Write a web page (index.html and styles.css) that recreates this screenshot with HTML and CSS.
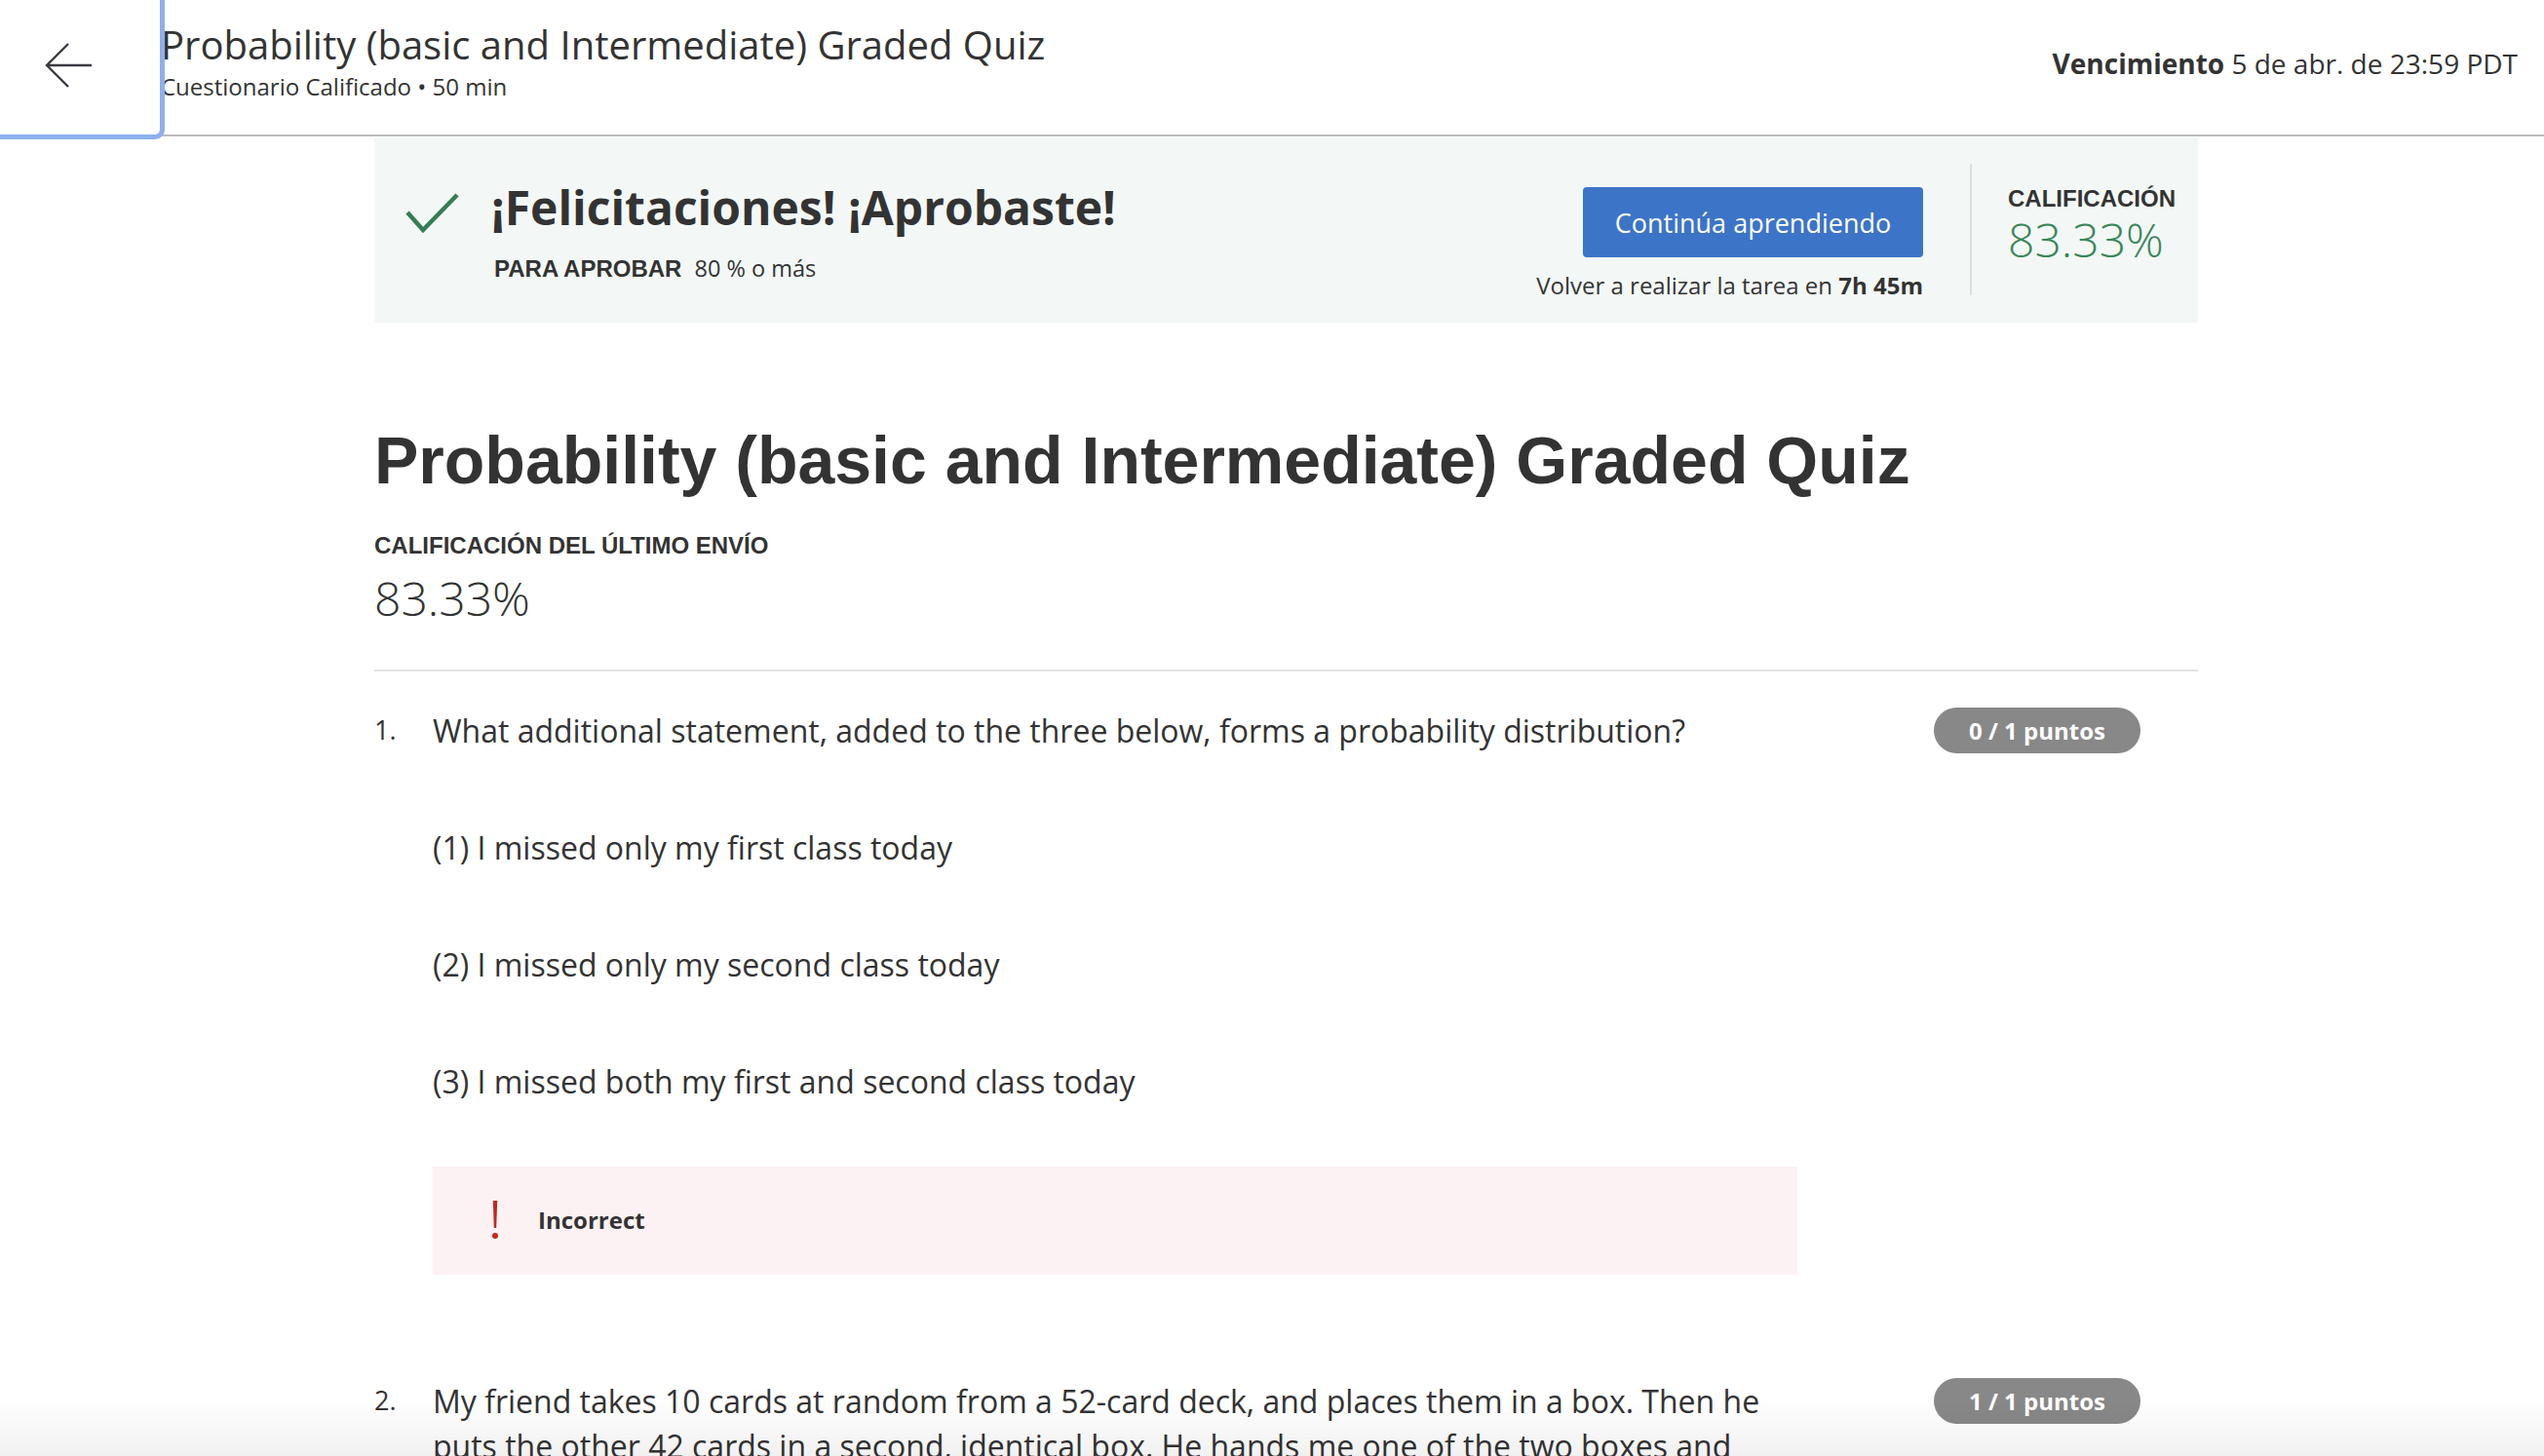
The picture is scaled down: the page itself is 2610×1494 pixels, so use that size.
FILE: index.html
```html
<!DOCTYPE html>
<html lang="es">
<head>
<meta charset="utf-8">
<title>Probability (basic and Intermediate) Graded Quiz</title>
<link rel="stylesheet" href="styles.css">
</head>
<body>
<header class="topbar">
  <button class="back-btn" aria-label="Volver">
    <svg width="48" height="48" viewBox="0 0 48 48" aria-hidden="true"><path d="M24 2 L2 24 L24 46 M2 24 H48" fill="none" stroke="#3a3a44" stroke-width="2.4"/></svg>
  </button>
  <div class="topbar-title">
    <div class="tt-main">Probability (basic and Intermediate) Graded Quiz</div>
    <div class="tt-sub">Cuestionario Calificado • 50 min</div>
  </div>
  <div class="due"><b>Vencimiento</b> 5 de abr. de 23:59 PDT</div>
</header>

<main class="content">
  <section class="banner">
    <div class="banner-main">
      <svg class="check" width="56" height="42" viewBox="0 0 56 42" aria-hidden="true"><path d="M2 20 L18 38 L53 2" fill="none" stroke="#357e55" stroke-width="4.5"/></svg>
      <div>
        <div class="congrats">¡Felicitaciones! ¡Aprobaste!</div>
        <div class="pass"><span class="pass-label">PARA APROBAR</span><span class="pass-val">80 % o más</span></div>
      </div>
    </div>
    <div class="banner-action">
      <button class="primary-btn">Continúa aprendiendo</button>
      <div class="retry">Volver a realizar la tarea en <b>7h 45m</b></div>
    </div>
    <div class="banner-divider"></div>
    <div class="banner-grade">
      <div class="caps-label">CALIFICACIÓN</div>
      <div class="grade-green">83.33%</div>
    </div>
  </section>

  <h1 class="quiz-title">Probability (basic and Intermediate) Graded Quiz</h1>
  <div class="caps-label last-label">CALIFICACIÓN DEL ÚLTIMO ENVÍO</div>
  <div class="grade-dark">83.33%</div>
  <hr class="divider">

  <div class="question">
    <div class="q-num">1.</div>
    <div class="q-body">
      <p class="q-line">What additional statement, added to the three below, forms a probability distribution?</p>
      <p class="q-line">(1) I missed only my first class today</p>
      <p class="q-line">(2) I missed only my second class today</p>
      <p class="q-line">(3) I missed both my first and second class today</p>
      <div class="feedback">
        <svg width="10" height="40" viewBox="0 0 10 40" aria-hidden="true"><path d="M2.8 0 H7.2 L6.2 28 H3.8 Z" fill="#c3281d"/><circle cx="5" cy="36" r="3" fill="#c3281d"/></svg>
        <span>Incorrect</span>
      </div>
    </div>
    <div class="points">0 / 1 puntos</div>
  </div>

  <div class="question q2">
    <div class="q-num">2.</div>
    <div class="q-body">
      <p class="q-line">My friend takes 10 cards at random from a 52-card deck, and places them in a box. Then he puts the other 42 cards in a second, identical box. He hands me one of the two boxes and asks me to draw out two cards. What is the probability that both cards are aces?</p>
    </div>
    <div class="points">1 / 1 puntos</div>
  </div>
</main>
<div class="bottom-shade"></div>
</body>
</html>
```

FILE: styles.css
```css
* { box-sizing: border-box; }
html, body { margin: 0; padding: 0; }
body {
  background: #fff;
  color: #333;
  font-family: "Open Sans", "Noto Sans", sans-serif;
  overflow: hidden;
}

.topbar {
  display: flex;
  align-items: center;
  height: 140px;
  border-bottom: 2px solid #bdbdbd;
}
.back-btn {
  width: 164px;
  height: 138px;
  flex: none;
  align-self: flex-start;
  border: none;
  background: #fff;
  padding: 0;
  display: flex;
  align-items: center;
  justify-content: center;
  outline: 5px solid #8db0ef;
  border-radius: 0 0 5px 0;
  position: relative;
  z-index: 2;
}
.back-btn svg { margin-left: -24px; margin-top: -4px; }
.topbar-title {
  flex: 1;
  padding-left: 1px;
  margin-top: -14px;
}
.tt-main { font-size: 40px; line-height: 54px; color: #333; }
.tt-sub { font-size: 24px; line-height: 32px; color: #333; }
.due {
  font-size: 28px;
  padding-right: 27px;
  color: #333;
  margin-top: -8px;
}
.due b { font-weight: 700; }

.content {
  margin-left: 384px;
  width: 1871px;
}

.banner {
  display: flex;
  height: 190px;
  background: #f3f8f7;
  margin-top: 1px;
}
.banner-main {
  flex: 1;
  display: flex;
  align-items: flex-start;
  padding: 38px 0 0 32px;
}
.check { margin-top: 19px; margin-right: 32px; flex: none; }
.congrats { font-size: 48px; font-weight: 700; line-height: 68px; color: #333; }
.pass { margin-top: 12px; display: flex; align-items: baseline; line-height: 32px; margin-left: 3px; }
.pass-label {
  font-family: "Liberation Sans", Arial, sans-serif;
  font-weight: 700;
  font-size: 24px;
  margin-right: 13px;
}
.pass-val { font-size: 23.5px; }

.banner-action {
  display: flex;
  flex-direction: column;
  align-items: flex-end;
  padding: 51px 48px 0 0;
}
.primary-btn {
  width: 349px;
  height: 72px;
  border: none;
  border-radius: 4px;
  background: #3c74c7;
  color: #fff;
  font-family: "Open Sans", sans-serif;
  font-size: 27px;
  font-weight: 500;
}
.retry { margin-top: 13px; font-size: 24px; line-height: 32px; color: #333; }
.retry b { font-weight: 700; }

.banner-divider {
  width: 2px;
  margin: 27px 0 28px;
  background: #dcdfdf;
}
.banner-grade {
  width: 232px;
  padding: 49px 0 0 37px;
}
.caps-label {
  font-family: "Liberation Sans", Arial, sans-serif;
  font-weight: 700;
  font-size: 24px;
  line-height: 28px;
  color: #333;
}
.grade-green {
  font-size: 48px;
  font-weight: 300;
  line-height: 54px;
  color: #3b8659;
  margin-top: 1px;
}

.quiz-title {
  margin: 101px 0 0;
  font-family: "Liberation Sans", Arial, sans-serif;
  font-weight: 700;
  font-size: 68px;
  line-height: 80px;
  color: #333;
}
.last-label { margin-top: 34px; }
.grade-dark {
  margin-top: 12px;
  font-size: 48px;
  font-weight: 300;
  line-height: 56px;
  color: #333;
}
.divider {
  margin: 45px 0 0;
  border: none;
  height: 2px;
  background: #e3e3e3;
}

.question {
  display: flex;
  align-items: flex-start;
  padding-top: 38px;
}
.q-num {
  width: 60px;
  flex: none;
  font-size: 27px;
  line-height: 44px;
  color: #333;
}
.q-body { width: 1400px; flex: none; }
.q-line {
  margin: 0 0 74px;
  font-size: 32px;
  line-height: 46px;
  color: #333;
}
.q-body .q-line:nth-of-type(4) { margin-bottom: 64px; }
.feedback {
  height: 111px;
  background: #fcf2f3;
  display: flex;
  align-items: center;
  padding-left: 59px;
}
.feedback svg { margin-right: 39px; margin-top: -2px; }
.feedback span { font-size: 24px; font-weight: 700; color: #333; margin-top: -2px; }

.points {
  margin-left: auto;
  margin-right: 59px;
  margin-top: -1px;
  height: 47px;
  padding: 0 36px;
  border-radius: 24px;
  background: #888;
  color: #fff;
  font-size: 24px;
  font-weight: 700;
  line-height: 47px;
  white-space: nowrap;
}
.q2 { padding-top: 107px; }

.bottom-shade {
  position: fixed;
  left: 0;
  right: 0;
  bottom: 0;
  height: 58px;
  background: linear-gradient(to bottom, rgba(0,0,0,0), rgba(0,0,0,0.055));
  pointer-events: none;
}
```
